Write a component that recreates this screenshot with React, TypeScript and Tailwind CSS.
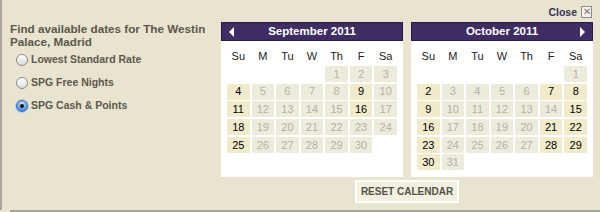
import React from "react";

type Month = {
  name: string;
  offset: number;
  days: number;
  open: number[];
  prev?: boolean;
  next?: boolean;
};

const MONTHS: Month[] = [
  { name: "September 2011", offset: 4, days: 30, open: [4, 9, 11, 16, 18, 25], prev: true },
  { name: "October 2011", offset: 6, days: 31, open: [2, 7, 8, 9, 15, 16, 21, 22, 23, 28, 29, 30], next: true },
];

const WEEK = ["Su", "M", "Tu", "W", "Th", "F", "Sa"];

function Radio({ checked }: { checked?: boolean }) {
  return checked ? (
    <span className="flex h-[12px] w-[12px] items-center justify-center rounded-full border border-[#3b6fb5] bg-[radial-gradient(circle_at_50%_30%,#cfe3fb,#5e9de6_60%,#2f6fc6)] shadow-[0_0_0_1px_rgba(90,150,230,0.35)]">
      <span className="h-[4px] w-[4px] rounded-full bg-[#111]" />
    </span>
  ) : (
    <span className="h-[12px] w-[12px] rounded-full border border-[#8a8a8a] bg-[linear-gradient(#ffffff,#dcdcdc)]" />
  );
}

function Calendar({ m }: { m: Month }) {
  const cells: (number | null)[] = [];
  for (let i = 0; i < m.offset; i++) cells.push(null);
  for (let d = 1; d <= m.days; d++) cells.push(d);

  return (
    <div className="flex h-[155px] w-[182px] flex-col bg-white">
      <div className="relative flex h-[19px] items-center justify-center border border-[#271a45] bg-[#3e2c62] text-[11.5px] font-bold text-white">
        {m.prev && <span className="absolute left-[7px] top-[4px] h-0 w-0 border-y-[5px] border-r-[5px] border-y-transparent border-r-white" />}
        {m.name}
        {m.next && <span className="absolute right-[7px] top-[4px] h-0 w-0 border-y-[5px] border-l-[5px] border-y-transparent border-l-white" />}
      </div>
      <div className="px-[6px] pt-[8px]">
        <div className="grid grid-cols-7 gap-x-[2px] text-center text-[11px] leading-[14px] text-[#222]">
          {WEEK.map((w) => (
            <div key={w}>{w}</div>
          ))}
        </div>
        <div className="mt-[3px] grid grid-cols-7 gap-x-[2px] gap-y-[1.7px] text-center text-[11px]">
          {cells.map((d, i) =>
            d === null ? (
              <div key={i} />
            ) : m.open.includes(d) ? (
              <div key={i} className="flex h-[16px] items-center justify-center rounded-[1px] bg-[#f1ebcb] text-black">
                {d}
              </div>
            ) : (
              <div key={i} className="flex h-[16px] items-center justify-center rounded-[1px] bg-[#ecebdc] text-[#b3b2a8]">
                {d}
              </div>
            )
          )}
        </div>
      </div>
    </div>
  );
}

export default function App() {
  return (
    <div className="h-[212px] w-[600px] overflow-hidden bg-[#e8e4d0] font-['Liberation_Sans',Arial,sans-serif]">
      <div className="flex h-[210px] border-l-2 border-[#a9a6a0]">
        <div className="w-[219px] pl-[8px] pt-[22px]">
          <p className="text-[11.7px] font-bold leading-[13px] text-[#5e574c]">
            Find available dates for The Westin Palace, Madrid
          </p>
          <div className="mt-[5px] flex flex-col gap-[10px] pl-[6px] text-[10.5px] font-bold text-[#5e574c]">
            {["Lowest Standard Rate", "SPG Free Nights", "SPG Cash & Points"].map((l, i) => (
              <label key={l} className="flex h-[13px] items-center gap-[3px]">
                <Radio checked={i === 2} />
                {l}
              </label>
            ))}
          </div>
        </div>
        <div className="flex flex-col">
          <div className="flex h-[22px] items-start justify-end pr-[1px] pt-[6px]">
            <span className="text-[10.5px] font-bold leading-[13px] text-[#3a3158]">Close</span>
            <span className="ml-[4px] flex h-[12px] w-[11px] items-center justify-center border border-[#8c8c8c] bg-[#f4f2e8] text-[10px] leading-none text-[#777]">
              ✕
            </span>
          </div>
          <div className="flex gap-[8px]">
            {MONTHS.map((m) => (
              <Calendar key={m.name} m={m} />
            ))}
          </div>
          <div className="mt-[3px] flex justify-center">
            <button className="h-[23px] border-2 border-white bg-[#f3f0e0] px-[4px] text-[10px] font-bold text-[#555049]">
              RESET CALENDAR
            </button>
          </div>
        </div>
      </div>
      <div className="ml-[10px] h-[2px] bg-[#aaa696]" />
    </div>
  );
}
